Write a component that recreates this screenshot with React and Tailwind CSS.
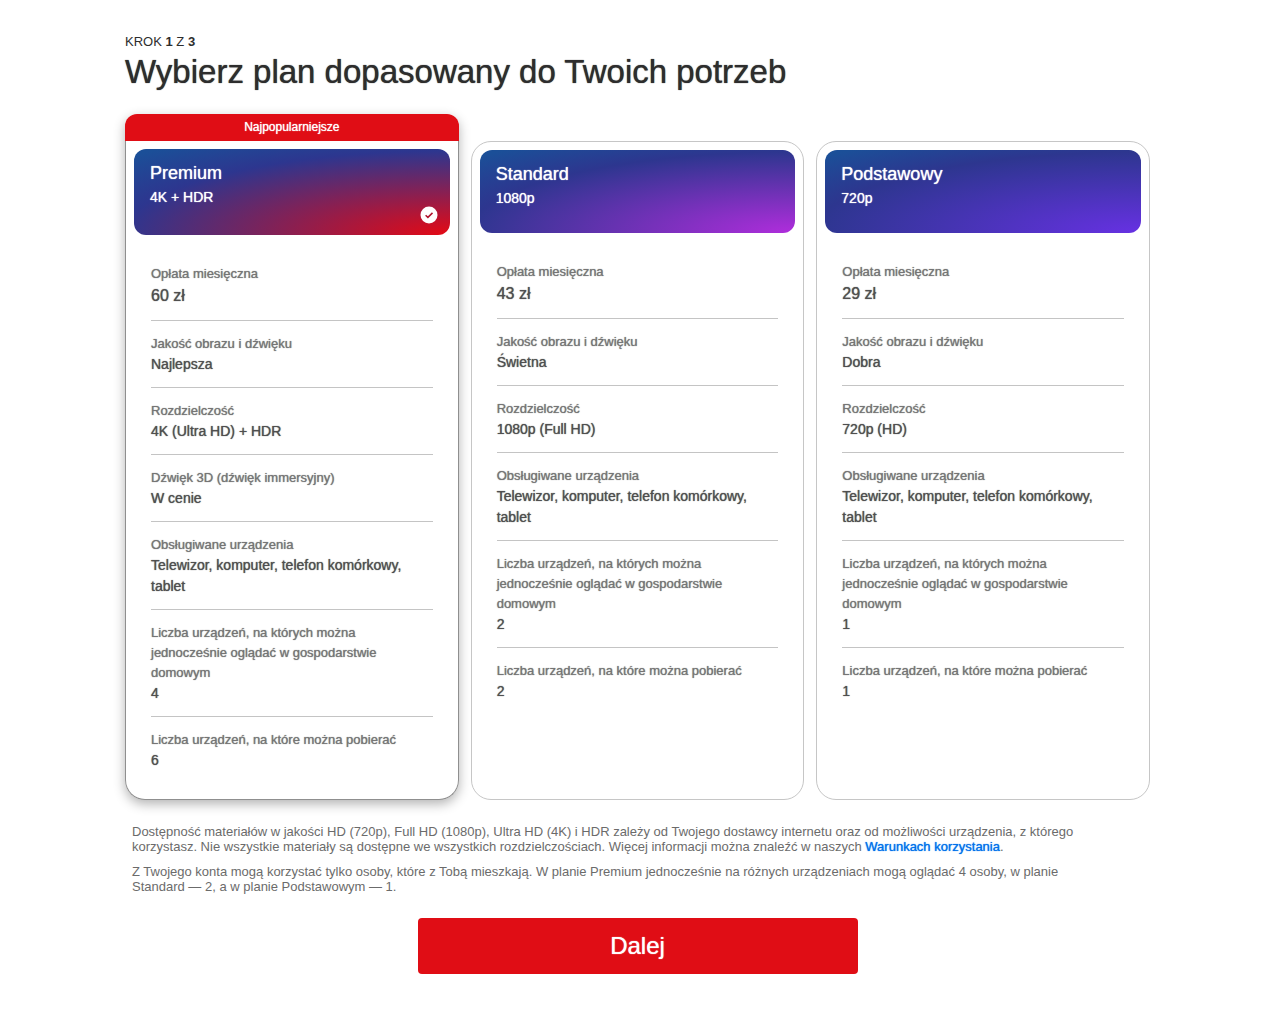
import { useState } from "react";

const DEVICES = "Telewizor, komputer, telefon komórkowy, tablet";
const STREAMS = "Liczba urządzeń, na których można jednocześnie oglądać w gospodarstwie domowym";
const DOWNLOADS = "Liczba urządzeń, na które można pobierać";

const plans = [
  {
    id: "premium",
    name: "Premium",
    quality: "4K + HDR",
    popular: true,
    gradient: "bg-[radial-gradient(140%_132%_at_100%_100%,#e50914_0%,#2d368f_74%,#1b4f98_100%)]",
    check: "text-[#b0132d]",
    features: [
      ["Opłata miesięczna", "60 zł"],
      ["Jakość obrazu i dźwięku", "Najlepsza"],
      ["Rozdzielczość", "4K (Ultra HD) + HDR"],
      ["Dźwięk 3D (dźwięk immersyjny)", "W cenie"],
      ["Obsługiwane urządzenia", DEVICES],
      [STREAMS, "4"],
      [DOWNLOADS, "6"],
    ],
  },
  {
    id: "standard",
    name: "Standard",
    quality: "1080p",
    gradient: "bg-[radial-gradient(140%_132%_at_100%_100%,#b02ddc_0%,#2d368f_74%,#1b4f98_100%)]",
    check: "text-[#8a2fc4]",
    features: [
      ["Opłata miesięczna", "43 zł"],
      ["Jakość obrazu i dźwięku", "Świetna"],
      ["Rozdzielczość", "1080p (Full HD)"],
      ["Obsługiwane urządzenia", DEVICES],
      [STREAMS, "2"],
      [DOWNLOADS, "2"],
    ],
  },
  {
    id: "basic",
    name: "Podstawowy",
    quality: "720p",
    gradient: "bg-[radial-gradient(140%_132%_at_100%_100%,#6731e3_0%,#2d368f_74%,#1b4f98_100%)]",
    check: "text-[#5a34cc]",
    features: [
      ["Opłata miesięczna", "29 zł"],
      ["Jakość obrazu i dźwięku", "Dobra"],
      ["Rozdzielczość", "720p (HD)"],
      ["Obsługiwane urządzenia", DEVICES],
      [STREAMS, "1"],
      [DOWNLOADS, "1"],
    ],
  },
];

// Liberation Sans has no medium weight; a tight shadow thickens the regular one.
const medium = "[text-shadow:0_0_1px_currentColor]";

function CheckBadge({ className }) {
  return (
    <svg
      viewBox="0 0 18 18"
      aria-hidden="true"
      className={`absolute right-3 bottom-[11px] size-[18px] ${className}`}
    >
      <circle cx="9" cy="9" r="8.5" fill="white" />
      <path d="M5.6 9.3 L7.9 11.4 L12.5 6.9" fill="none" stroke="currentColor" strokeWidth="1.5" />
    </svg>
  );
}

function PlanCard({ plan, selected, onSelect }) {
  return (
    <label
      className={`flex cursor-pointer flex-col rounded-b-[20px] ${
        plan.popular ? "rounded-t-xl" : "mt-[27px] rounded-t-[20px]"
      } ${selected ? "shadow-[0_4px_12px_rgba(0,0,0,0.3)]" : ""}`}
    >
      <input
        type="radio"
        name="plan"
        value={plan.id}
        checked={selected}
        onChange={() => onSelect(plan.id)}
        className="sr-only"
      />
      {plan.popular && (
        <span
          className={`z-10 rounded-t-xl bg-[#e00d15] text-center text-xs leading-[27px] text-white ${medium}`}
        >
          Najpopularniejsze
        </span>
      )}
      <div
        className={`flex flex-1 flex-col gap-4 rounded-b-[20px] border bg-white p-2 ${
          plan.popular ? "border-t-0" : "rounded-t-[20px]"
        } ${selected ? "border-[#8f8f8f]" : "border-[#c6c6c6]"}`}
      >
        <div
          className={`relative rounded-xl px-4 pt-3 text-white ${plan.gradient} ${
            selected ? "h-[86px]" : "h-[83px]"
          }`}
        >
          <h2 className={`text-lg leading-6 ${medium}`}>{plan.name}</h2>
          <p className={`text-sm leading-6 ${medium}`}>{plan.quality}</p>
          {selected && <CheckBadge className={plan.check} />}
        </div>
        <dl className={`divide-y divide-[#c4c4c4] px-[17px] pb-2 ${medium}`}>
          {plan.features.map(([label, value], i) => (
            <div key={label} className="pt-[13px] pb-3">
              <dt className="text-[13px] leading-5 text-[#757575] [text-shadow:inherit]">{label}</dt>
              <dd
                className={`text-[#4f4f4f] ${medium} ${
                  i === 0 ? "text-base" : "text-sm leading-[21px]"
                }`}
              >
                {value}
              </dd>
            </div>
          ))}
        </dl>
      </div>
    </label>
  );
}

export default function App() {
  const [selected, setSelected] = useState("premium");

  return (
    <main className="mx-auto max-w-[1025px] bg-white pt-8 pb-10 font-['Liberation_Sans',Arial,sans-serif]">
      <form onSubmit={(e) => e.preventDefault()}>
        <p className="text-[13px] leading-5 text-[#2d2d2d]">
          KROK <b>1</b> Z <b>3</b>
        </p>
        <h1 className={`text-[33px] leading-10 text-[#2d2d2d] ${medium}`}>
          Wybierz plan dopasowany do Twoich potrzeb
        </h1>
        <div className="mt-[22px] grid grid-cols-3 gap-3">
          {plans.map((plan) => (
            <PlanCard
              key={plan.id}
              plan={plan}
              selected={selected === plan.id}
              onSelect={setSelected}
            />
          ))}
        </div>
        <div className="mt-6 flex flex-col gap-[10px] pr-16 pl-[7px] text-[13px] leading-[15px] text-[#6b6b6b]">
          <p>
            Dostępność materiałów w jakości HD (720p), Full HD (1080p), Ultra HD (4K) i HDR zależy od
            Twojego dostawcy internetu oraz od możliwości urządzenia, z którego korzystasz. Nie
            wszystkie materiały są dostępne we wszystkich rozdzielczościach. Więcej informacji można
            znaleźć w naszych{" "}
            <a href="#warunki" className={`text-[#0071eb] ${medium}`}>
              Warunkach korzystania
            </a>
            .
          </p>
          <p>
            Z Twojego konta mogą korzystać tylko osoby, które z Tobą mieszkają. W planie Premium
            jednocześnie na różnych urządzeniach mogą oglądać 4 osoby, w planie Standard — 2, a w
            planie Podstawowym — 1.
          </p>
        </div>
        <button
          type="submit"
          className={`mx-auto mt-6 block h-14 w-full max-w-[440px] cursor-pointer rounded bg-[#e00d15] text-2xl text-white ${medium}`}
        >
          Dalej
        </button>
      </form>
    </main>
  );
}
